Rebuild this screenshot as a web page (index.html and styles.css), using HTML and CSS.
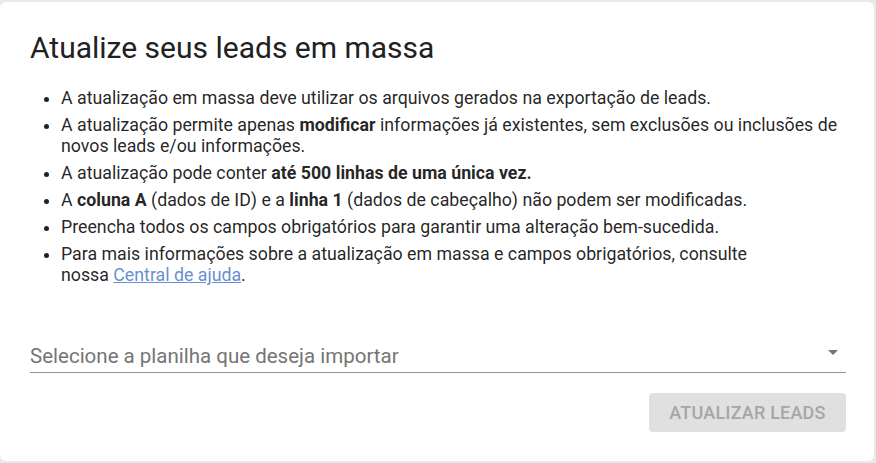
FILE: index.html
```html
<!DOCTYPE html>
<html lang="pt-BR">
<head>
<meta charset="utf-8">
<title>Atualize seus leads em massa</title>
<link rel="stylesheet" href="styles.css">
</head>
<body>
<div class="dialog">
  <h1 class="title">Atualize seus leads em massa</h1>
  <ul class="rules">
    <li>A atualização em massa deve utilizar os arquivos gerados na exportação de leads.</li>
    <li>A atualização permite apenas <b>modificar</b> informações já existentes, sem exclusões ou inclusões de novos leads e/ou informações.</li>
    <li>A atualização pode conter <b>até 500 linhas de uma única vez.</b></li>
    <li>A <b>coluna A</b> (dados de ID) e a <b>linha 1</b> (dados de cabeçalho) não podem ser modificadas.</li>
    <li>Preencha todos os campos obrigatórios para garantir uma alteração bem-sucedida.</li>
    <li>Para mais informações sobre a atualização em massa e campos obrigatórios, consulte<br>nossa <a href="#" class="link">Central de ajuda</a>.</li>
  </ul>
  <div class="select">
    <span class="placeholder">Selecione a planilha que deseja importar</span>
    <span class="arrow"></span>
  </div>
  <div class="actions">
    <button class="btn" disabled>Atualizar leads</button>
  </div>
</div>
</body>
</html>
```

FILE: styles.css
```css
html, body {
  margin: 0;
  padding: 0;
}
body {
  background: #e9e9e9;
  font-family: Roboto, "Liberation Sans", sans-serif;
  color: rgba(0, 0, 0, 0.87);
  width: 876px;
  height: 463px;
  padding: 2px 2px 2px 0;
  box-sizing: border-box;
}
.dialog {
  background: #fff;
  border-radius: 6px;
  height: 100%;
  box-sizing: border-box;
  padding: 28px 28px 0 30px;
  display: flex;
  flex-direction: column;
}
.title {
  margin: 0;
  font-size: 30px;
  font-weight: 400;
  line-height: 36px;
  color: #212121;
}
.rules {
  margin: 22px 0 0;
  padding-left: 31px;
  font-size: 17.75px;
  line-height: 21px;
}
.rules li {
  margin-bottom: 6px;
}
.rules li:nth-child(n+4) {
  margin-top: 1px;
}
.rules b {
  font-weight: 700;
}
.link {
  color: #6a8fce;
  text-decoration: underline;
}
.select {
  margin-top: 47px;
  display: flex;
  align-items: center;
  justify-content: space-between;
  border-bottom: 1px solid #949494;
  height: 34px;
  box-sizing: border-box;
  padding-top: 1px;
}
.placeholder {
  font-size: 20.5px;
  color: #757575;
}
.arrow {
  width: 0;
  height: 0;
  border-left: 5px solid transparent;
  border-right: 5px solid transparent;
  border-top: 5px solid #757575;
  margin-right: 8px;
  margin-bottom: 7px;
}
.actions {
  display: flex;
  justify-content: flex-end;
  margin-top: 20px;
}
.btn {
  font-family: Roboto, "Liberation Sans", sans-serif;
  font-size: 18px;
  font-weight: 500;
  letter-spacing: 0.2px;
  text-transform: uppercase;
  background: #e0e0e0;
  color: #a6a6a6;
  border: none;
  border-radius: 4px;
  width: 197px;
  height: 39px;
  padding: 0;
}
```
